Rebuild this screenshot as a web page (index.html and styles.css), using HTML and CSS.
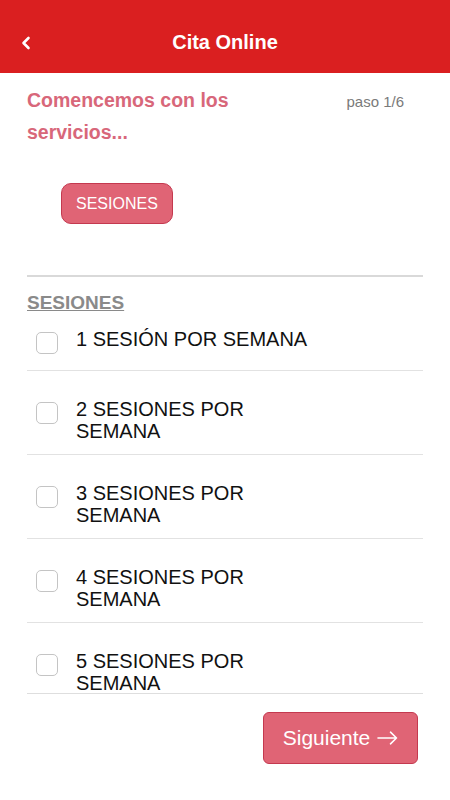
FILE: index.html
```html
<!DOCTYPE html>
<html lang="es">
<head>
    <meta charset="UTF-8">
    <meta name="viewport" content="width=device-width, initial-scale=1.0">
    <title>Cita Online</title>
    <link rel="stylesheet" href="styles.css">
</head>
<body>
    <header class="barra">
        <button class="volver" aria-label="Volver">
            <svg width="12" height="14" viewBox="0 0 12 14">
                <polyline points="8.5,2 3.5,7 8.5,12" fill="none" stroke="#fff" stroke-width="2.6" stroke-linecap="round" stroke-linejoin="round"/>
            </svg>
        </button>
        <h1>Cita Online</h1>
        <span></span>
    </header>

    <main>
        <!-- Cabecera del paso -->
        <div class="intro">
            <h2>Comencemos con los servicios...</h2>
            <span class="paso">paso 1/6</span>
        </div>

        <!-- Categorias de servicios -->
        <div class="categorias">
            <button class="chip">SESIONES</button>
        </div>

        <!-- Lista de servicios -->
        <section class="servicios">
            <h3 class="seccion">SESIONES</h3>
            <ul class="lista">
                <li class="opcion primera">
                    <span class="check"></span>
                    <span class="texto">1 SESIÓN POR SEMANA</span>
                </li>
                <li class="opcion">
                    <span class="check"></span>
                    <span class="texto">2 SESIONES POR SEMANA</span>
                </li>
                <li class="opcion">
                    <span class="check"></span>
                    <span class="texto">3 SESIONES POR SEMANA</span>
                </li>
                <li class="opcion">
                    <span class="check"></span>
                    <span class="texto">4 SESIONES POR SEMANA</span>
                </li>
                <li class="opcion">
                    <span class="check"></span>
                    <span class="texto">5 SESIONES POR SEMANA</span>
                </li>
            </ul>
        </section>

        <div class="acciones">
            <button class="siguiente">
                Siguiente
                <svg width="21" height="14" viewBox="0 0 21 14">
                    <path d="M1 7H19.5M13.5 1.2L19.5 7L13.5 12.8" fill="none" stroke="#fff" stroke-width="1.6" stroke-linecap="round" stroke-linejoin="round"/>
                </svg>
            </button>
        </div>
    </main>
</body>
</html>
```

FILE: styles.css
```css
* {
    box-sizing: border-box;
}
body {
    font-family: "Liberation Sans", Arial, sans-serif;
    margin: 0;
    padding: 0;
    background-color: #fff;
    color: #111;
}
button {
    font-family: inherit;
    cursor: pointer;
}
.barra {
    height: 73px;
    padding-top: 12px;
    background: #da1f20;
    color: white;
    display: grid;
    grid-template-columns: 54px 1fr 54px;
    align-items: center;
}
.barra h1 {
    margin: 0;
    text-align: center;
    font-size: 20px;
    font-weight: bold;
}
.volver {
    background: none;
    border: none;
    padding: 0 0 0 20px;
    display: flex;
    align-items: center;
}
.intro {
    display: flex;
    justify-content: space-between;
    align-items: baseline;
    padding: 11px 46px 0 27px;
}
.intro h2 {
    margin: 0;
    width: 215px;
    font-size: 19.5px;
    line-height: 32px;
    font-weight: bold;
    color: #d8677a;
}
.paso {
    font-size: 15px;
    color: #7a7a7a;
}
.categorias {
    padding: 35px 27px 0 61px;
}
.chip {
    height: 41px;
    padding: 0 14px;
    font-size: 16px;
    color: white;
    background-color: #e06475;
    border: 1px solid #c4394f;
    border-radius: 10px;
}
.servicios {
    margin: 51px 27px 0;
    border-top: 2px solid #d9d9d9;
}
.seccion {
    margin: 15px 0 0;
    font-size: 19px;
    line-height: 22px;
    font-weight: bold;
    color: #8a8a8a;
    text-decoration: underline;
}
.lista {
    list-style: none;
    margin: 0;
    padding: 0;
    height: 380px;
    overflow: hidden;
    border-bottom: 1px solid #dedede;
}
.opcion {
    display: flex;
    align-items: flex-start;
    gap: 18px;
    padding: 27px 0 12px 9px;
    border-top: 1px solid #e2e2e2;
}
.opcion.primera {
    border-top: none;
    padding: 14px 0 16px 9px;
}
.check {
    flex: 0 0 22px;
    height: 22px;
    margin-top: 4px;
    border: 1px solid #c4c4c4;
    border-radius: 5px;
}
.texto {
    max-width: 240px;
    font-size: 20px;
    line-height: 22px;
    color: #111;
}
.acciones {
    display: flex;
    justify-content: flex-end;
    padding: 18px 32px 0;
}
.siguiente {
    width: 155px;
    height: 52px;
    display: flex;
    align-items: center;
    justify-content: center;
    gap: 7px;
    font-size: 21px;
    color: white;
    background-color: #e06475;
    border: 1px solid #c4394f;
    border-radius: 6px;
}
```
